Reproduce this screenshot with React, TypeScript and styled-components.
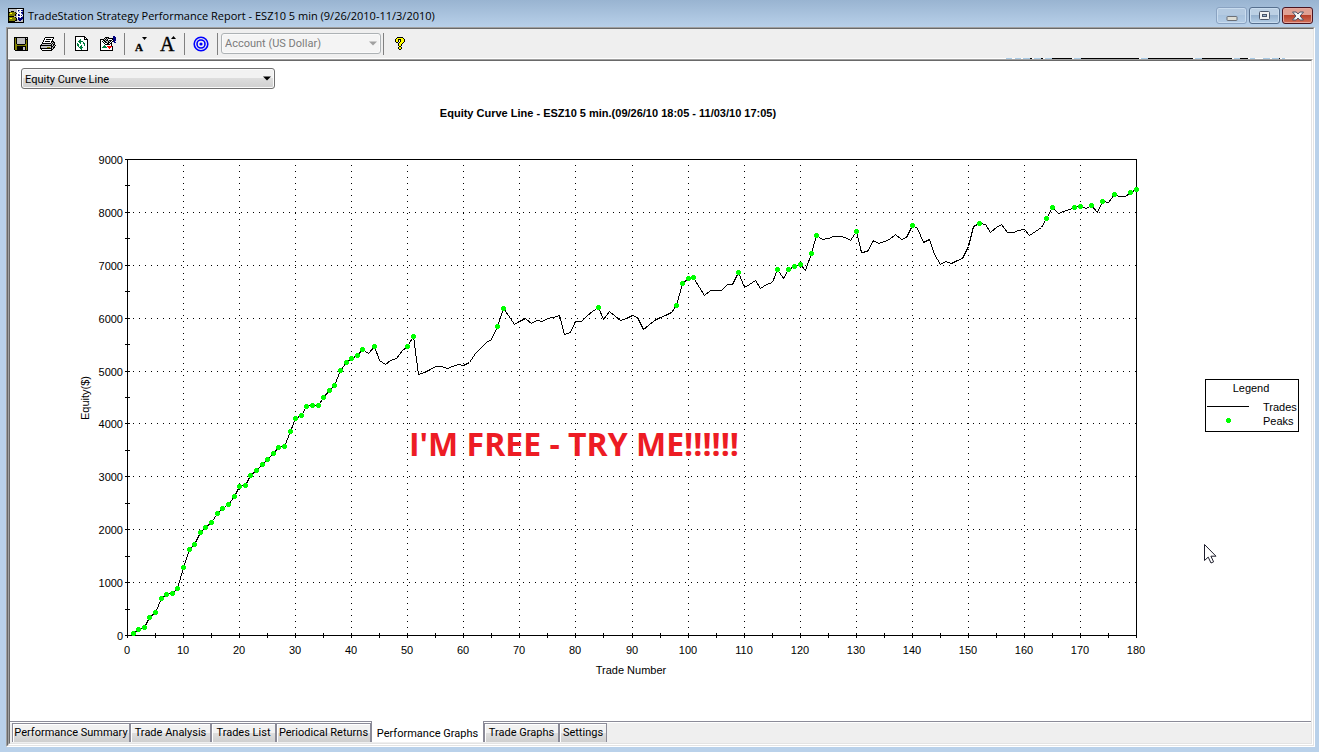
import React from "react";
import styled, { createGlobalStyle } from "styled-components";

const GlobalStyle = createGlobalStyle`
  *, *::before, *::after { box-sizing: border-box; }
  html, body, #root { height: 100%; }
  body {
    margin: 0;
    overflow: hidden;
    font: 11px/14px "Liberation Sans", Arial, sans-serif;
    color: #000;
  }
`;

const Window = styled.div`
  display: flex;
  flex-direction: column;
  height: 100vh;
  padding: 0 4px 5px 6px;
  background: linear-gradient(#99b4d1, #b9d1ea 28px);
`;

const TitleBar = styled.header`
  display: flex;
  align-items: center;
  height: 27px;
  flex: none;
  padding: 4px 2px 0 2px;
  gap: 4px;
`;

const Title = styled.h1`
  flex: 1;
  margin: 0;
  font: 11px/16px "Open Sans", "Segoe UI", sans-serif;
  white-space: nowrap;
`;

const WindowButtons = styled.div`
  display: flex;
  gap: 2px;
`;

const WindowButton = styled.button<{ $kind: "min" | "max" | "close" }>`
  display: grid;
  place-items: center;
  width: 31px;
  height: 17px;
  padding: 0;
  border-radius: 3px;
  border: 1px solid
    ${(p) => (p.$kind === "close" ? "#4a1420" : p.$kind === "max" ? "#566f8e" : "#8aa3c2")};
  box-shadow: inset 0 0 0 1px ${(p) => (p.$kind === "close" ? "#e5a69c" : "#c9dcef")};
  background: ${(p) =>
    p.$kind === "close"
      ? "linear-gradient(#e0a093 0 45%, #b73d26 46%, #d2705a)"
      : p.$kind === "max"
        ? "linear-gradient(#bcd0e4 0 45%, #94b0cd 46%, #b4cde5)"
        : "linear-gradient(#b4cae1 0 45%, #a8c2dd 46%, #b5cde6)"};
`;

const Frame = styled.div`
  display: flex;
  flex-direction: column;
  flex: 1;
  min-height: 0;
  border: 1px solid;
  border-color: #a0a0a0 #fff #fff #a0a0a0;
`;

const FrameInner = styled.div`
  display: flex;
  flex-direction: column;
  flex: 1;
  min-height: 0;
  border: 1px solid;
  border-color: #696969 #e3e3e3 #e3e3e3 #696969;
  background: #efefef;
`;

const Toolbar = styled.div`
  position: relative;
  display: flex;
  align-items: center;
  flex: none;
  height: 30px;
  border-bottom: 1px solid #fff;
`;

const ToolButton = styled.button`
  display: grid;
  place-items: center;
  width: 27px;
  height: 24px;
  padding: 0 1px 0 0;
  border: 0;
  background: none;
`;

const Separator = styled.span`
  width: 1px;
  height: 22px;
  margin: 0 3px 0 2px;
  background: #808080;
`;

const Residue = styled.svg`
  position: absolute;
  right: 0;
  bottom: -1px;
`;

const SelectBox = styled.div<{ $width: number }>`
  position: relative;
  width: ${(p) => p.$width}px;
  max-width: 100%;
  height: 21px;
  flex: none;

  & > svg {
    position: absolute;
    right: 4px;
    top: 8px;
    pointer-events: none;
  }
`;

const Select = styled.select`
  appearance: none;
  width: 100%;
  height: 21px;
  padding: 2px 16px 0 3px;
  border: 1px solid #707070;
  border-radius: 3px;
  box-shadow: inset 0 0 0 1px #fafafa;
  background: linear-gradient(#f2f2f2 0 48%, #dddddd 50%, #cfcfcf);
  color: #000;
  font: 11px/14px Roboto, "Liberation Sans", sans-serif;

  &:disabled {
    padding-top: 0;
    border-color: #adb2b5;
    background: #f4f4f4;
    color: #7b7b7b;
    opacity: 1;
  }
`;

const Pane = styled.div`
  display: flex;
  flex-direction: column;
  flex: 1;
  min-height: 0;
  border: 1px solid;
  border-color: #a0a0a0 #fff #fff #a0a0a0;
`;

const PaneInner = styled.div`
  display: flex;
  flex-direction: column;
  flex: 1;
  min-height: 0;
  border: 1px solid;
  border-color: #696969 #e3e3e3 #e3e3e3 #696969;
`;

const Report = styled.main`
  display: flex;
  flex-direction: column;
  flex: 1;
  min-height: 0;
  background: #fff;
`;

const GraphPicker = styled.div`
  padding: 7px 11px 1px;
`;

const ChartSvg = styled.svg`
  display: block;
  flex: 1 1 0;
  min-height: 0;
  width: 100%;
  font-family: "Liberation Sans", Arial, sans-serif;
  font-size: 11px;
`;

const Tabs = styled.nav`
  display: flex;
  align-items: flex-start;
  flex: none;
  height: 22px;
  padding-left: 2px;
  border-top: 1px solid #8b8b98;
  background: linear-gradient(#fff 0 1px, #efefef 1px);
`;

const Tab = styled.button<{ $active?: boolean; $width: number }>`
  width: ${(p) => p.$width}px;
  height: ${(p) => (p.$active ? 21 : 19)}px;
  margin-top: ${(p) => (p.$active ? -1 : 1)}px;
  padding: ${(p) => (p.$active ? "4px 0 0" : "0 0 1px")};
  border: 1px solid #8b8b98;
  border-width: ${(p) => (p.$active ? "0 1px" : "1px 1px 0")};
  box-shadow: ${(p) => (p.$active ? "none" : "inset 1px 1px 0 #fff")};
  background: ${(p) => (p.$active ? "#fff" : "linear-gradient(#f2f2f2 0 48%, #dedede 50%, #cfcfcf)")};
  color: #000;
  font: 11px/14px Roboto, "Liberation Sans", sans-serif;
  white-space: nowrap;
`;

const INK: Record<string, string> = {
  K: "#000000",
  O: "#808000",
  W: "#ffffff",
  Y: "#ffff00",
  G: "#008040",
  R: "#ff0000",
  B: "#000080",
  L: "#c0c0c0",
  S: "#7d8fc0",
};

function PixelIcon({ rows }: { rows: string[] }) {
  const w = Math.max(...rows.map((r) => r.length));
  return (
    <svg width={w} height={rows.length} shapeRendering="crispEdges" aria-hidden="true">
      {rows.flatMap((row, y) =>
        [...row].map((c, x) =>
          INK[c] ? <rect key={`${x}-${y}`} x={x} y={y} width="1" height="1" fill={INK[c]} /> : null
        )
      )}
    </svg>
  );
}

const SAVE = [
  "KKKKKKKKKKKKKK",
  "KOKLLLLLLLLKLK",
  "KOKLLLLLLLLKKK",
  "KOKLLLLLLLLKOK",
  "KOKLLLLLLLLKOK",
  "KOKLLLLLLLLKOK",
  "KOKLLLLLLLLKOK",
  "KOOKKKKKKKKOOK",
  "KOOOOOOOOOOOOK",
  "KOOKKKKKKKKKOK",
  "KOOKKKKKKLLKOK",
  "KOOKKKKKKLLKOK",
  "KOOKKKKKKLLKOK",
  ".KKKKKKKKKKKKK",
];

const PRINT = [
  ".....KKKKKKKKK..",
  "....KWWWWWWWWK..",
  "....KWKKKKKWK...",
  "...KWWWWWWWWK...",
  "...KWKKKKKWKKK..",
  "..KWWWWWWWWKLKK.",
  "..KKKKKKKKKLKLK.",
  ".KLLLLLLLLLKLKK.",
  "KKKKKKKKKKKKLKLK",
  "KLLLLLLLLLLKKLK.",
  "KLLLLLLOOOLKLKK.",
  "KKKKKKKKKKKKLK..",
  ".KWWWWWWWWWKK...",
  "..KKKKKKKKKK....",
];

const REFRESH = [
  "KKKKKKKKKK...",
  "KWWWWWWWWKK..",
  "KWWWWWWWWKWK.",
  "KWWWWGWWWKKKK",
  "KWWWGGWWWWWWK",
  "KWWGGGGGWWWWK",
  "KWWWGGWWGWWWK",
  "KWGWWGWWGGWWK",
  "KWGGWWWWWGWWK",
  "KWGGWWGWWGWWK",
  "KWWGWGGWWWWWK",
  "KWWWGGGGWWWWK",
  "KWWWWGGWWWWWK",
  "KWWWWWGWWWWWK",
  "KKKKKKKKKKKKK",
];

const FORMAT = [
  ".............BB.",
  ".....KKKK....BBB",
  "....KLKLKKKKKBBB",
  "KKKKLKLKWWWWKBBB",
  "KWWKKLKKLKKKWKBB",
  "KWKWKKLLKLKWKBB.",
  "KWWKWKKLKKWKW.BB",
  "KWWWKWWKKWKK....",
  "KWWWWKKKKKWK....",
  "KWWWGWWWWWWK....",
  "KWWGGGWRRRRRK...",
  "KWGGGGGWRRRWK...",
  "KWWWWWWWWRWWK...",
  "KWWWWWWWWWWWK...",
  "KKKKKKKKKKKKK...",
];

const HELP = [
  "..KKKKKK..",
  ".KYYYYYYK.",
  "KYYKKKYYYK",
  "KYYK.KYYYK",
  "KYYK.KYYYK",
  ".KK.KYYYK.",
  "...KYYYK..",
  "...KYYK...",
  "...KYYK...",
  "....KK....",
  "...KYYK...",
  "...KYYK...",
  "....KK....",
];

const APP_ICON = [
  "KKKKKKKKKKKKKKKK",
  "KLLLLLLLLWWWWWLK",
  "KLLLLLLLLWBSWBBK",
  "KLLKKKLLLWSWWWSK",
  "KKOOOOOKLWWSWBBK",
  "KOYYOOOOKWWWWSBK",
  "KOOOOOOKLWBSWWSK",
  "KOOOOOOKLWBBWBWK",
  "KKKKKKLLLWWWWWSK",
  "KOOOOOOKLWBSWBBK",
  "KOYYOOOOKWBBBBBK",
  "KOOOOOOOKLBBBBSK",
  "KOOOOOOKKLLBBLLK",
  "KKKKKKKLLLLLLLLK",
  "KKKKKKKKKKKKKKKK",
];

function LetterIcon({ big }: { big?: boolean }) {
  return (
    <svg width="20" height="20" aria-hidden="true">
      <text
        x={big ? 2 : 4}
        y="17"
        fontFamily="Liberation Serif, serif"
        fontWeight={big ? 400 : 700}
        fontSize={big ? 20 : 11}
        stroke="#000"
        strokeWidth={big ? 0.4 : 0.3}
      >
        A
      </text>
      <path d={big ? "M13 5h5l-2.5-3z" : "M11 3h5l-2.5 3z"} />
    </svg>
  );
}

function TargetIcon() {
  return (
    <svg width="16" height="16" fill="none" stroke="#00f" strokeWidth="1.6" aria-hidden="true">
      <circle cx="8" cy="8" r="6.8" />
      <circle cx="8" cy="8" r="4" />
      <circle cx="8" cy="8" r="1.6" fill="#00f" stroke="none" />
    </svg>
  );
}

function Arrow({ color }: { color: string }) {
  return (
    <svg width="8" height="5" aria-hidden="true">
      <path d="M0 0.5h8l-4 4z" fill={color} />
    </svg>
  );
}

/* Cumulative equity after each trade; FULL_SCALE units correspond to $9000. */
const FULL_SCALE = 476;
const EQUITY = [
  2, 6, 8, 18, 23, 37, 41, 42, 47, 68,
  86, 91, 103, 108, 113, 122, 127, 131, 139, 149,
  150, 160, 165, 171, 176, 182, 188, 189, 204, 217,
  220, 229, 230, 230, 238, 245, 250, 265, 273, 277,
  280, 286, 282, 289, 275, 271, 275, 277, 285, 289,
  299, 261, 263, 266, 269, 269, 267, 269, 271, 270,
  273, 282, 287, 293, 296, 309, 327, 320, 311, 314,
  317, 312, 315, 314, 317, 318, 320, 301, 303, 314,
  314, 320, 324, 328, 316, 324, 319, 315, 317, 320,
  318, 306, 310, 315, 318, 320, 323, 330, 352, 357,
  358, 348, 340, 345, 345, 345, 351, 351, 363, 348,
  351, 355, 347, 351, 353, 366, 357, 366, 369, 371,
  365, 382, 400, 396, 397, 399, 399, 398, 395, 404,
  383, 384, 395, 392, 394, 396, 401, 396, 398, 410,
  407, 393, 396, 381, 371, 374, 372, 375, 377, 389,
  409, 412, 411, 403, 408, 411, 403, 403, 405, 406,
  400, 404, 408, 417, 428, 422, 424, 426, 428, 429,
  427, 430, 423, 434, 433, 441, 439, 439, 443, 446,
];

const PLOT_W = 1009;
const tradeX = (n: number) => Math.round((n * PLOT_W) / 180);
const levelY = (v: number) => FULL_SCALE - v;
const dollarsY = (d: number) => Math.round(FULL_SCALE - (d * FULL_SCALE) / 9000);

const POINTS = EQUITY.map((v, i) => ({
  x: tradeX(i + 1),
  y: levelY(v),
  peak: v >= Math.max(...EQUITY.slice(0, i + 1)),
}));

const range = (count: number) => Array.from({ length: count }, (_, i) => i);

function EquityChart() {
  return (
    <ChartSvg viewBox="0 0 1301 631" role="img" aria-label="Equity curve by trade number">
      <text x="598" y="27" textAnchor="middle" fontWeight="700">
        Equity Curve Line - ESZ10 5 min.(09/26/10 18:05 - 11/03/10 17:05)
      </text>
      <text textAnchor="middle" transform="translate(79 308) rotate(-90)">
        Equity($)
      </text>
      <g transform="translate(117 69)">
        <g transform="translate(0.5 0.5)" stroke="#000" fill="none" shapeRendering="crispEdges">
          <g strokeDasharray="1 5">
            {range(8).map((i) => (
              <path key={i} d={`M-0.5 ${dollarsY((i + 1) * 1000)}H${PLOT_W}`} />
            ))}
            {range(17).map((i) => (
              <path key={i} d={`M${tradeX((i + 1) * 10)} -0.5V${FULL_SCALE}`} />
            ))}
          </g>
          <rect width={PLOT_W} height={FULL_SCALE} />
          {range(19).map((i) => (
            <path key={i} d={`M-2.5 ${dollarsY(i * 500)}h5`} />
          ))}
          {range(37).map((i) => (
            <path key={i} d={`M${tradeX(i * 5)} ${FULL_SCALE - 2.5}v5`} />
          ))}
        </g>
        <g>
          {range(10).map((i) => (
            <text key={i} x="-4" y={dollarsY(i * 1000) + 5} textAnchor="end">
              {i * 1000}
            </text>
          ))}
          {range(19).map((i) => (
            <text key={i} x={tradeX(i * 10)} y={FULL_SCALE + 19} textAnchor="middle">
              {i * 10}
            </text>
          ))}
        </g>
        <text
          x="282"
          y="297"
          fill="#ed1c24"
          fontFamily="Open Sans, Calibri, sans-serif"
          fontWeight="700"
          fontSize="32"
        >
          I'M FREE - TRY ME!!!!!!
        </text>
        <g transform="translate(0.5 0.5)" shapeRendering="crispEdges">
          <polyline points={POINTS.map((p) => `${p.x},${p.y}`).join(" ")} fill="none" stroke="#000" />
          {POINTS.filter((p) => p.peak).map((p) => (
            <circle key={p.x} cx={p.x} cy={p.y} r="2.5" fill="#0f0" />
          ))}
        </g>
      </g>
      <text x="621" y="584" textAnchor="middle">
        Trade Number
      </text>
      <g transform="translate(1195 289)">
        <g shapeRendering="crispEdges">
          <rect x="0.5" y="0.5" width="93" height="52" fill="#fff" stroke="#000" />
          <path d="M2 27.5h42" stroke="#000" />
          <circle cx="23.5" cy="41.5" r="2.5" fill="#0f0" />
        </g>
        <text x="46" y="13" textAnchor="middle">Legend</text>
        <text x="58" y="32">Trades</text>
        <text x="58" y="46">Peaks</text>
      </g>
      <path
        d="M1194.5 454.5v16l3.7-3.4 2.8 5.9 2.6-1.2-2.7-5.6h5.1z"
        fill="#fff"
        stroke="#1d1d2b"
      />
    </ChartSvg>
  );
}

const RESIDUE_BLACK = [[41, 2], [52, 2], [63, 20], [92, 58], [159, 45], [213, 30], [251, 8], [290, 1]];
const RESIDUE_BLUE = [[17, 6], [26, 6], [34, 7], [45, 7], [56, 7], [85, 7], [152, 7], [206, 7], [245, 6], [261, 5], [274, 7], [283, 7], [293, 3]];

const TABS = [
  { label: "Performance Summary", width: 118 },
  { label: "Trade Analysis", width: 81 },
  { label: "Trades List", width: 65 },
  { label: "Periodical Returns", width: 95 },
  { label: "Performance Graphs", width: 113, active: true },
  { label: "Trade Graphs", width: 75 },
  { label: "Settings", width: 48 },
];

export default function App() {
  return (
    <Window>
      <GlobalStyle />
      <TitleBar>
        <PixelIcon rows={APP_ICON} />
        <Title>TradeStation Strategy Performance Report - ESZ10 5 min (9/26/2010-11/3/2010)</Title>
        <WindowButtons>
          <WindowButton $kind="min" aria-label="Minimize">
            <svg width="12" height="13" aria-hidden="true">
              <rect x="1" y="7.5" width="10" height="4" rx="0.5" fill="#deded6" stroke="#6b7078" />
            </svg>
          </WindowButton>
          <WindowButton $kind="max" aria-label="Restore">
            <svg width="11" height="9" aria-hidden="true">
              <rect x="0.5" y="0.5" width="10" height="8" rx="1" fill="#f2f2f2" stroke="#4d5669" />
              <rect x="3.5" y="3.5" width="4" height="2" fill="#9bb4d0" stroke="#4d5669" />
            </svg>
          </WindowButton>
          <WindowButton $kind="close" aria-label="Close">
            <svg width="12" height="10" aria-hidden="true">
              <path
                d="M0.5 1h3.7l1.8 2 1.8-2h3.7l-3.4 4 3.4 4H7.8L6 7 4.2 9H0.5l3.4-4z"
                fill="#f4f4f4"
                stroke="#4f5266"
                strokeLinejoin="round"
              />
            </svg>
          </WindowButton>
        </WindowButtons>
      </TitleBar>
      <Frame>
        <FrameInner>
          <Toolbar role="toolbar">
            <ToolButton aria-label="Save"><PixelIcon rows={SAVE} /></ToolButton>
            <ToolButton aria-label="Print"><PixelIcon rows={PRINT} /></ToolButton>
            <Separator />
            <ToolButton aria-label="Refresh"><PixelIcon rows={REFRESH} /></ToolButton>
            <ToolButton aria-label="Format"><PixelIcon rows={FORMAT} /></ToolButton>
            <Separator />
            <ToolButton aria-label="Decrease font"><LetterIcon /></ToolButton>
            <ToolButton aria-label="Increase font"><LetterIcon big /></ToolButton>
            <Separator />
            <ToolButton aria-label="Target"><TargetIcon /></ToolButton>
            <Separator />
            <SelectBox $width={160}>
              <Select aria-label="Currency" disabled defaultValue="account">
                <option value="account">Account (US Dollar)</option>
              </Select>
              <Arrow color="#a0a0a0" />
            </SelectBox>
            <Separator />
            <ToolButton aria-label="Help"><PixelIcon rows={HELP} /></ToolButton>
            <Residue width="308" height="1" shapeRendering="crispEdges" aria-hidden="true">
              {RESIDUE_BLUE.map(([x, w]) => (
                <rect key={x} x={x - 16} width={w} height="1" fill="#a9cbe6" />
              ))}
              {RESIDUE_BLACK.map(([x, w]) => (
                <rect key={x} x={x - 16} width={w} height="1" fill="#000" />
              ))}
            </Residue>
          </Toolbar>
          <Pane>
            <PaneInner>
              <Report>
                <GraphPicker>
                  <SelectBox $width={254}>
                    <Select aria-label="Graph" defaultValue="equity">
                      <option value="equity">Equity Curve Line</option>
                    </Select>
                    <Arrow color="#000" />
                  </SelectBox>
                </GraphPicker>
                <EquityChart />
              </Report>
              <Tabs>
                {TABS.map((t) => (
                  <Tab key={t.label} $width={t.width} $active={t.active}>
                    {t.label}
                  </Tab>
                ))}
              </Tabs>
            </PaneInner>
          </Pane>
        </FrameInner>
      </Frame>
    </Window>
  );
}
